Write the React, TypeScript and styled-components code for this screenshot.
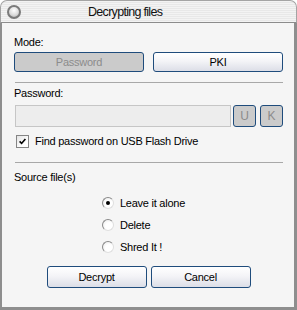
import * as React from 'react';
import styled, { createGlobalStyle } from 'styled-components';

const GlobalStyle = createGlobalStyle`
  html, body {
    margin: 0;
    padding: 0;
    background: #ffffff;
  }
  body {
    font-family: "Liberation Sans", Arial, sans-serif;
    font-size: 11px;
    letter-spacing: -0.25px;
    color: #000;
  }
`;

const Window = styled.div`
  width: 297px;
  height: 310px;
  display: flex;
  flex-direction: column;
`;

const TitleBar = styled.div`
  height: 23px;
  box-sizing: border-box;
  display: flex;
  align-items: center;
  padding-left: 6px;
  border: 1px solid #a4a4a4;
  border-bottom-color: #8c8c8c;
  border-radius: 7px 7px 0 0;
  background: repeating-linear-gradient(
    180deg,
    #f3f3f3 0px,
    #f3f3f3 1px,
    #e8e8e8 1px,
    #e8e8e8 2px
  );
`;

const CloseDot = styled.span`
  width: 14px;
  height: 14px;
  box-sizing: border-box;
  border-radius: 50%;
  border: 2px solid #7a7a7a;
  background: radial-gradient(circle at 50% 35%, #ffffff 0%, #dcdcdc 55%, #a8a8a8 100%);
`;

const Title = styled.span`
  margin-left: 67px;
  font-size: 12.5px;
  letter-spacing: -0.7px;
  color: #111;
`;

const Pane = styled.div`
  flex: 1;
  display: flex;
  flex-direction: column;
  background: #f5f5f5;
  border: solid #8e8e8e;
  border-width: 0 3px 3px 2px;
  padding: 13px 11px 0 12px;
`;

const Label = styled.div<{ $gap?: number }>`
  line-height: 13px;
  margin-top: ${(p) => p.$gap ?? 0}px;
`;

const ModeRow = styled.div`
  display: grid;
  grid-template-columns: 1fr 1fr;
  gap: 9px;
  height: 20px;
  margin-top: 3px;
`;

const Separator = styled.div<{ $gap: number }>`
  height: 1px;
  margin: ${(p) => p.$gap}px 0 0 1px;
  background: #a8a8a8;
`;

const Button = styled.button`
  height: 100%;
  box-sizing: border-box;
  padding: 0;
  border: 1px solid #1f4c7c;
  border-radius: 3px;
  background: linear-gradient(#ffffff, #f4f4f7 45%, #dcdee7);
  font: inherit;
  letter-spacing: inherit;
  color: #000;

  &:disabled {
    background: #cbcbcb;
    color: #8c8c8c;
  }
`;

const PasswordRow = styled.div`
  display: flex;
  height: 22px;
  margin-top: 5px;
`;

const PasswordInput = styled.div`
  flex: 1;
  margin-left: 1px;
  box-sizing: border-box;
  background: #ededed;
  border: 1px solid #c6c6c6;
`;

const KeyButton = styled(Button)<{ $gap: number }>`
  width: 23px;
  margin-left: ${(p) => p.$gap}px;
  font-size: 12px;
`;

const CheckRow = styled.label`
  display: flex;
  align-items: center;
  height: 14px;
  margin-top: 7px;
  padding-left: 2px;
`;

const CheckBox = styled.span`
  width: 13px;
  height: 13px;
  box-sizing: border-box;
  border: 1px solid #858585;
  background: linear-gradient(135deg, #e4e4e4, #ffffff 70%);
  display: flex;
  align-items: center;
  justify-content: center;
  margin-right: 6px;
`;

const RadioGroup = styled.div`
  display: flex;
  flex-direction: column;
  margin-top: 8px;
  padding-left: 88px;
`;

const RadioRow = styled.label`
  display: flex;
  align-items: center;
  height: 22px;
`;

const RadioDot = styled.span<{ $on?: boolean }>`
  width: 12px;
  height: 12px;
  box-sizing: border-box;
  border-radius: 50%;
  border: 1px solid;
  border-color: #8a8a8a #e0e0e0 #e0e0e0 #8a8a8a;
  background: radial-gradient(circle at 60% 60%, #ffffff 40%, #e6e6e6 100%);
  display: flex;
  align-items: center;
  justify-content: center;
  margin-right: 6px;

  &::after {
    content: '';
    width: 4px;
    height: 4px;
    border-radius: 50%;
    background: #000;
    display: ${(p) => (p.$on ? 'block' : 'none')};
  }
`;

const Actions = styled.div`
  display: flex;
  justify-content: center;
  gap: 4px;
  height: 22px;
  margin-top: 8px;
`;

const ActionButton = styled(Button)`
  width: 100px;
`;

export default function App() {
  return (
    <>
      <GlobalStyle />
      <Window>
        <TitleBar>
          <CloseDot />
          <Title>Decrypting files</Title>
        </TitleBar>
        <Pane>
          <Label>Mode:</Label>
          <ModeRow>
            <Button disabled>Password</Button>
            <Button>PKI</Button>
          </ModeRow>
          <Separator $gap={10} />
          <Label $gap={4}>Password:</Label>
          <PasswordRow>
            <PasswordInput />
            <KeyButton $gap={2} disabled>U</KeyButton>
            <KeyButton $gap={4} disabled>K</KeyButton>
          </PasswordRow>
          <CheckRow>
            <CheckBox>
              <svg width="7" height="7" viewBox="0 0 7 7">
                <path d="M0.6 3.4 L2.6 5.4 L6.4 1" fill="none" stroke="#000" strokeWidth="1.6" />
              </svg>
            </CheckBox>
            Find password on USB Flash Drive
          </CheckRow>
          <Separator $gap={14} />
          <Label $gap={8}>Source file(s)</Label>
          <RadioGroup>
            <RadioRow>
              <RadioDot $on />
              Leave it alone
            </RadioRow>
            <RadioRow>
              <RadioDot />
              Delete
            </RadioRow>
            <RadioRow>
              <RadioDot />
              Shred It !
            </RadioRow>
          </RadioGroup>
          <Actions>
            <ActionButton>Decrypt</ActionButton>
            <ActionButton>Cancel</ActionButton>
          </Actions>
        </Pane>
      </Window>
    </>
  );
}
